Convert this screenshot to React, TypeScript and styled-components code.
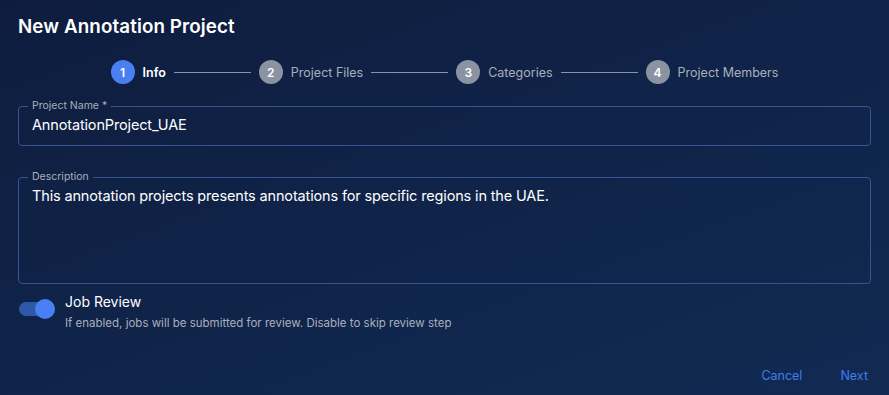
import styled, { createGlobalStyle } from "styled-components";

const GlobalStyle = createGlobalStyle`
  html, body {
    margin: 0;
    padding: 0;
    background: #0f2043;
  }
  body {
    font-family: "Inter", "Roboto", sans-serif;
    -webkit-font-smoothing: antialiased;
  }
`;

const Dialog = styled.div`
  width: 889px;
  height: 395px;
  box-sizing: border-box;
  padding: 15px 18px 0 18px;
  background: linear-gradient(160deg, #0e1d3e 0%, #10244a 55%, #122a52 100%);
  color: #ffffff;
  display: flex;
  flex-direction: column;
`;

const Title = styled.h2`
  margin: 0;
  font-size: 18.8px;
  font-weight: 600;
  line-height: 24px;
  letter-spacing: 0.1px;
`;

const Stepper = styled.div`
  display: flex;
  align-items: center;
  justify-content: center;
  margin-top: 21px;
  height: 24px;
`;

const Step = styled.div`
  display: flex;
  align-items: center;
  gap: 8px;
`;

const StepCircle = styled.div<{ $active?: boolean }>`
  width: 24px;
  height: 24px;
  border-radius: 50%;
  background: ${(p) => (p.$active ? "#4a7ff2" : "#8b93a3")};
  color: #ffffff;
  font-size: 12px;
  font-weight: 600;
  display: flex;
  align-items: center;
  justify-content: center;
`;

const StepLabel = styled.span<{ $active?: boolean }>`
  font-size: 12.5px;
  font-weight: ${(p) => (p.$active ? 600 : 400)};
  color: ${(p) => (p.$active ? "#ffffff" : "#a9b0bd")};
`;

const Connector = styled.div`
  width: 77px;
  height: 1px;
  background: #8a93a6;
  margin-right: 8px;
`;

const Field = styled.fieldset<{ $height: number }>`
  margin: 0;
  padding: 0 13px;
  height: ${(p) => p.$height}px;
  box-sizing: border-box;
  border: 1px solid #34558f;
  border-radius: 4px;
  min-width: 0;
`;

const Legend = styled.legend`
  font-size: 10.5px;
  color: #a9b0bd;
  padding: 0 4px;
  margin-left: -4px;
  line-height: 12px;
`;

const FieldValue = styled.div<{ $top: number }>`
  font-size: 14.5px;
  letter-spacing: -0.15px;
  color: #ffffff;
  line-height: 20px;
  margin-top: ${(p) => p.$top}px;
`;

const Form = styled.div`
  display: flex;
  flex-direction: column;
  gap: 25px;
  margin-top: 16px;
`;

const ToggleRow = styled.div`
  display: flex;
  align-items: flex-start;
  gap: 10px;
  margin-top: 8px;
`;

const Switch = styled.div`
  position: relative;
  width: 37px;
  height: 20px;
  margin-top: 7px;
  flex-shrink: 0;
`;

const Track = styled.div`
  position: absolute;
  left: 1px;
  top: 3px;
  width: 32px;
  height: 14px;
  border-radius: 7px;
  background: #2f58a8;
`;

const Thumb = styled.div`
  position: absolute;
  right: 0;
  top: 0;
  width: 20px;
  height: 20px;
  border-radius: 50%;
  background: #4a80f5;
`;

const ToggleText = styled.div`
  display: flex;
  flex-direction: column;
`;

const ToggleTitle = styled.span`
  font-size: 14px;
  color: #ffffff;
  line-height: 20px;
`;

const ToggleHint = styled.span`
  font-size: 11.5px;
  color: #a9b0bd;
  line-height: 16px;
  margin-top: 3px;
`;

const Actions = styled.div`
  display: flex;
  justify-content: flex-end;
  gap: 38px;
  margin-top: auto;
  padding: 0 3px 12px 0;
`;

const TextButton = styled.button`
  background: none;
  border: 0;
  padding: 0;
  font-family: inherit;
  font-size: 12.5px;
  color: #3f7ef0;
  cursor: pointer;
`;

const steps = ["Info", "Project Files", "Categories", "Project Members"];

export default function App() {
  return (
    <>
      <GlobalStyle />
      <Dialog>
        <Title>New Annotation Project</Title>
        <Stepper>
          {steps.map((label, i) => (
            <Step key={label}>
              <StepCircle $active={i === 0}>{i + 1}</StepCircle>
              <StepLabel $active={i === 0}>{label}</StepLabel>
              {i < steps.length - 1 ? <Connector /> : null}
            </Step>
          ))}
        </Stepper>
        <Form>
          <Field $height={46}>
            <Legend>Project Name *</Legend>
            <FieldValue $top={3}>AnnotationProject_UAE</FieldValue>
          </Field>
          <Field $height={113}>
            <Legend>Description</Legend>
            <FieldValue $top={3}>
              This annotation projects presents annotations for specific regions in the UAE.
            </FieldValue>
          </Field>
        </Form>
        <ToggleRow>
          <Switch>
            <Track />
            <Thumb />
          </Switch>
          <ToggleText>
            <ToggleTitle>Job Review</ToggleTitle>
            <ToggleHint>
              If enabled, jobs will be submitted for review. Disable to skip review step
            </ToggleHint>
          </ToggleText>
        </ToggleRow>
        <Actions>
          <TextButton>Cancel</TextButton>
          <TextButton>Next</TextButton>
        </Actions>
      </Dialog>
    </>
  );
}
